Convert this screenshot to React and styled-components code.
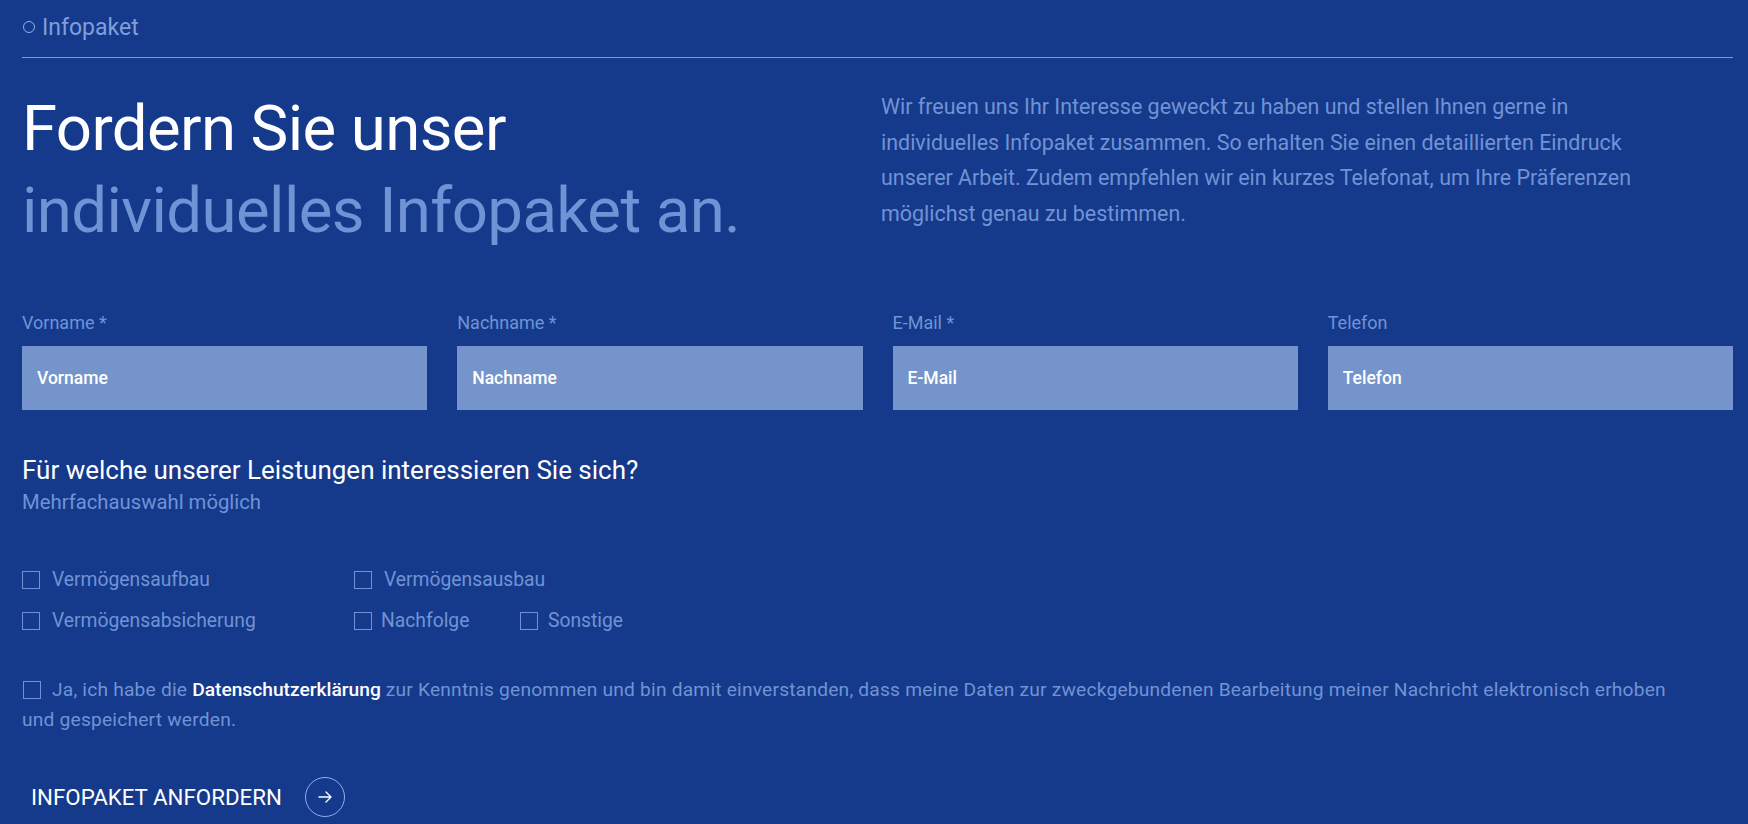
import React from "react";
import styled, { createGlobalStyle } from "styled-components";

const Global = createGlobalStyle`
  html, body { margin: 0; padding: 0; background: #153a8b; }
  body { font-family: Roboto, "Liberation Sans", sans-serif; }
  * { box-sizing: border-box; }
`;

const C = {
  bg: "#153a8b",
  light: "#7093d6",
  input: "#7494cb",
  white: "#ffffff",
};

const Page = styled.div`
  background: ${C.bg};
  min-height: 824px;
  padding: 0 15px 20px 22px;
  color: ${C.light};
`;

const Breadcrumb = styled.div`
  display: flex;
  align-items: center;
  gap: 7px;
  height: 58px;
  padding-bottom: 3px;
  border-bottom: 1px solid #7c9cd9;
  font-size: 23px;
  color: #7e9fdc;
`;

const Dot = styled.span`
  width: 12px;
  height: 12px;
  border-radius: 50%;
  border: 1.5px solid #8fb0ea;
  margin-left: 1px;
`;

const Intro = styled.section`
  display: grid;
  grid-template-columns: 859px 1fr;
  padding-top: 30px;
`;

const Heading = styled.h1`
  margin: 0;
  font-weight: 400;
  font-size: 63.5px;
  line-height: 82px;
  letter-spacing: -0.6px;
  color: ${C.white};
`;

const HeadingLine = styled.span`
  display: block;
  color: ${(p) => (p.$muted ? C.light : C.white)};
`;

const Lead = styled.p`
  margin: 0;
  padding-top: 1px;
  font-size: 21.45px;
  line-height: 35.7px;
  color: ${C.light};
`;

const LeadLine = styled.span`
  display: block;
  white-space: nowrap;
`;

const Fields = styled.div`
  display: grid;
  grid-template-columns: repeat(4, 1fr);
  gap: 30px;
  margin-top: 61px;
`;

const Field = styled.label`
  display: flex;
  flex-direction: column;
  gap: 13px;
`;

const Label = styled.span`
  font-size: 18px;
  line-height: 20px;
  color: ${C.light};
`;

const Input = styled.input`
  height: 64px;
  border: none;
  outline: none;
  background: ${C.input};
  padding: 0 15px;
  font-family: inherit;
  font-size: 17.5px;
  font-weight: 500;
  color: ${C.white};
  &::placeholder { color: ${C.white}; opacity: 1; }
`;

const Question = styled.h2`
  margin: 44px 0 0;
  font-weight: 400;
  font-size: 26px;
  line-height: 32px;
  color: ${C.white};
`;

const Hint = styled.p`
  margin: 3px 0 0;
  font-size: 20.3px;
  line-height: 26px;
  color: ${C.light};
`;

const Options = styled.div`
  display: grid;
  grid-template-columns: 332px 166px max-content;
  row-gap: 17px;
  margin-top: 53px;
`;

const Option = styled.label`
  display: flex;
  align-items: center;
  gap: ${(p) => p.$gap || 12}px;
  font-size: 19.3px;
  line-height: 24px;
  color: ${C.light};
  grid-column: ${(p) => p.$col || "auto"};
`;

const Box = styled.span`
  flex: none;
  width: 18px;
  height: 18px;
  border: 1.5px solid #6f92d6;
`;

const Consent = styled.div`
  margin-top: 42px;
  font-size: 19.2px;
  line-height: 30px;
  letter-spacing: 0.2px;
  color: ${C.light};
`;

const InlineBox = styled(Box)`
  display: inline-block;
  vertical-align: -3px;
  margin-right: 11px;
  margin-left: 1px;
`;

const Strong = styled.span`
  color: ${C.white};
  font-weight: 500;
  letter-spacing: 0;
`;

const Submit = styled.button`
  display: flex;
  align-items: center;
  gap: 23px;
  margin-top: 42px;
  margin-left: 9px;
  padding: 0;
  background: none;
  border: none;
  font-family: inherit;
  font-size: 22.3px;
  color: ${C.white};
  cursor: pointer;
`;

const ArrowCircle = styled.span`
  width: 40px;
  height: 40px;
  border-radius: 50%;
  border: 1.5px solid #8fb0ea;
  display: flex;
  align-items: center;
  justify-content: center;
`;

export default function App() {
  return (
    <>
      <Global />
      <Page>
        <Breadcrumb>
          <Dot />
          Infopaket
        </Breadcrumb>
        <Intro>
          <Heading>
            <HeadingLine>Fordern Sie unser</HeadingLine>
            <HeadingLine $muted>individuelles Infopaket an.</HeadingLine>
          </Heading>
          <Lead>
            <LeadLine>Wir freuen uns Ihr Interesse geweckt zu haben und stellen Ihnen gerne in</LeadLine>
            <LeadLine>individuelles Infopaket zusammen. So erhalten Sie einen detaillierten Eindruck</LeadLine>
            <LeadLine>unserer Arbeit. Zudem empfehlen wir ein kurzes Telefonat, um Ihre Präferenzen</LeadLine>
            <LeadLine>möglichst genau zu bestimmen.</LeadLine>
          </Lead>
        </Intro>
        <Fields>
          {[
            ["Vorname *", "Vorname"],
            ["Nachname *", "Nachname"],
            ["E-Mail *", "E-Mail"],
            ["Telefon", "Telefon"],
          ].map(([l, p]) => (
            <Field key={p}>
              <Label>{l}</Label>
              <Input placeholder={p} />
            </Field>
          ))}
        </Fields>
        <Question>Für welche unserer Leistungen interessieren Sie sich?</Question>
        <Hint>Mehrfachauswahl möglich</Hint>
        <Options>
          <Option>
            <Box />
            Vermögensaufbau
          </Option>
          <Option $gap={12} $col="2 / span 2">
            <Box />
            Vermögensausbau
          </Option>
          <Option>
            <Box />
            Vermögensabsicherung
          </Option>
          <Option $gap={9}>
            <Box />
            Nachfolge
          </Option>
          <Option $gap={10}>
            <Box />
            Sonstige
          </Option>
        </Options>
        <Consent>
          <InlineBox />
          Ja, ich habe die <Strong>Datenschutzerklärung</Strong> zur Kenntnis genommen und bin damit
          einverstanden, dass meine Daten zur zweckgebundenen Bearbeitung meiner Nachricht elektronisch
          erhoben
          <br />
          und gespeichert werden.
        </Consent>
        <Submit type="button">
          INFOPAKET ANFORDERN
          <ArrowCircle>
            <svg width="14" height="12" viewBox="0 0 14 12" fill="none" stroke="#fff" strokeWidth="1.4" strokeLinecap="round" strokeLinejoin="round">
              <path d="M1 6h12M8 1l5 5-5 5" />
            </svg>
          </ArrowCircle>
        </Submit>
      </Page>
    </>
  );
}
